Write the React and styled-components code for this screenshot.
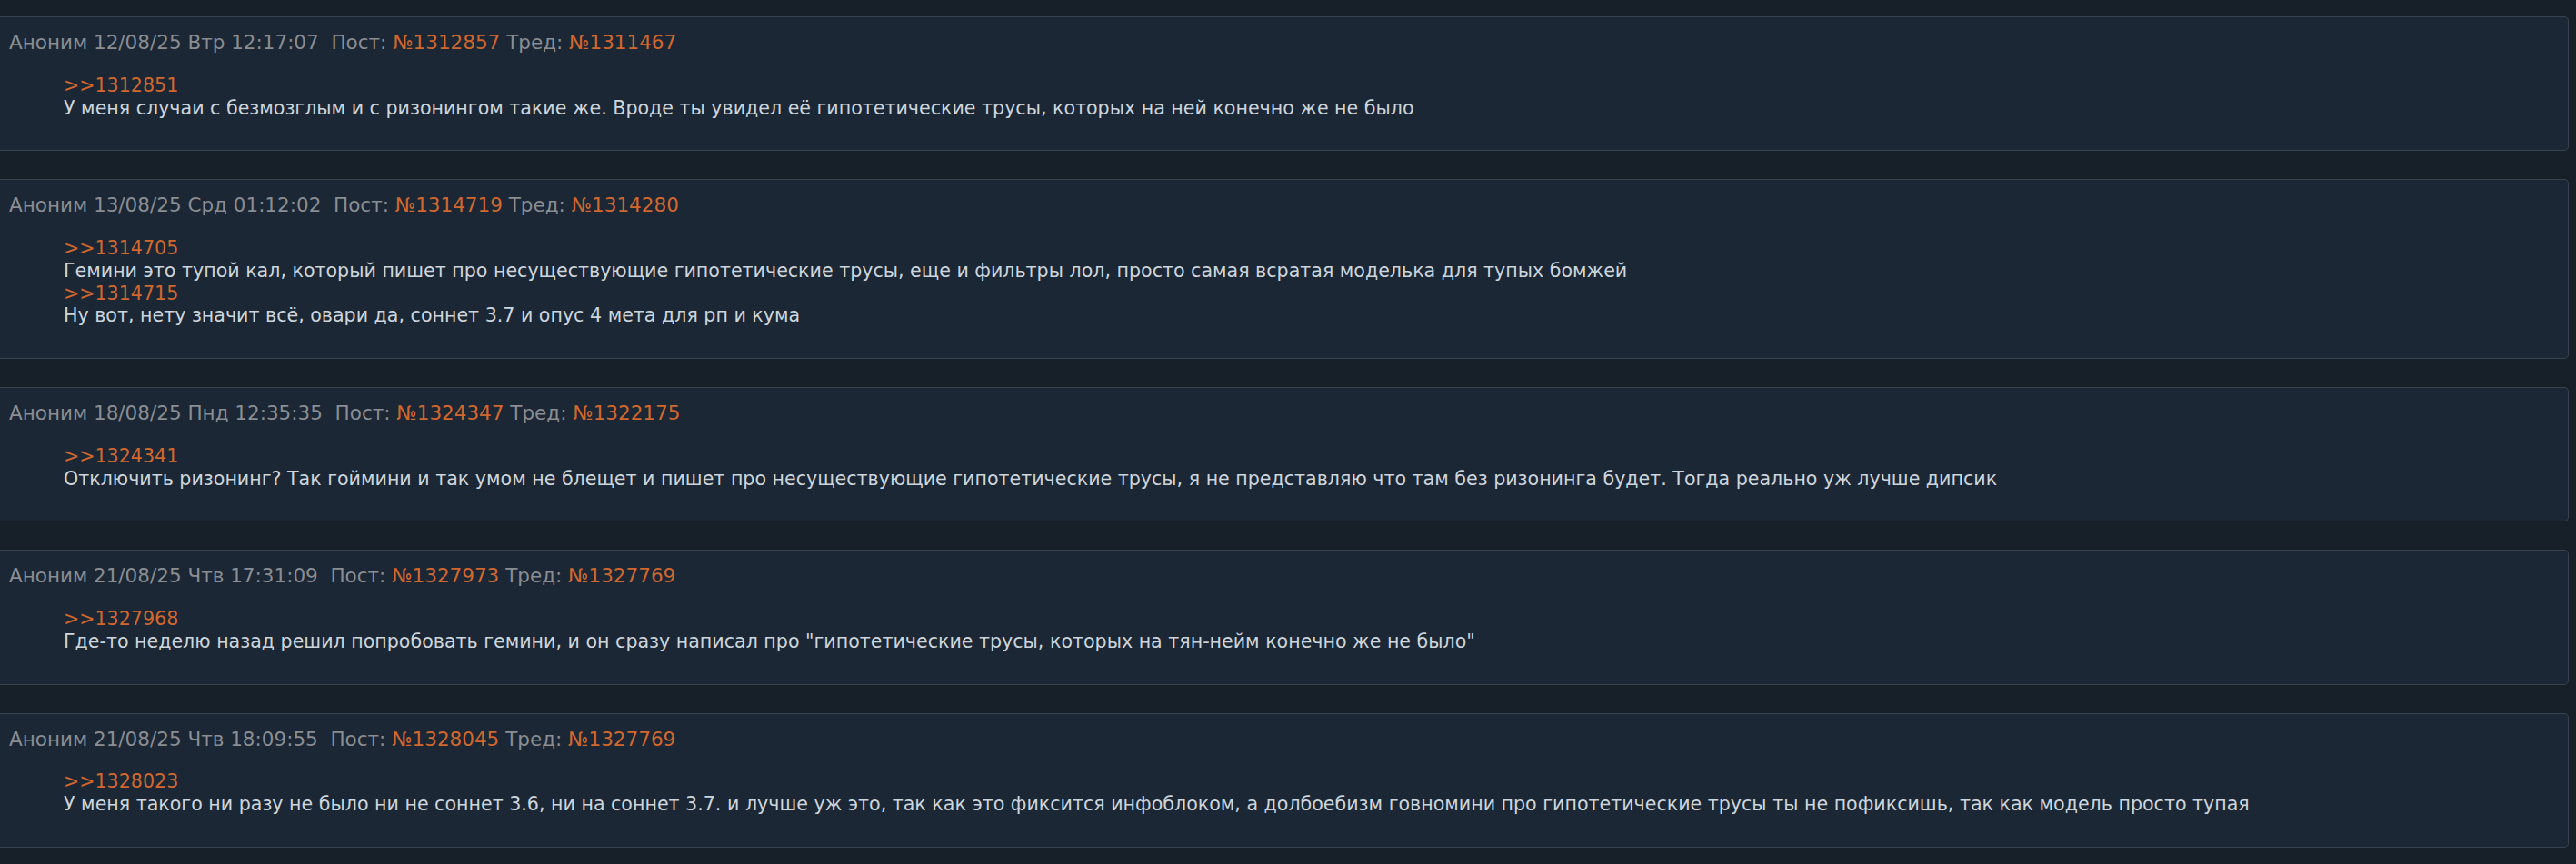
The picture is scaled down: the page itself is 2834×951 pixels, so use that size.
import React from 'react'
import styled, { createGlobalStyle } from 'styled-components'

const posts = [
    {
        date: '12/08/25 Втр 12:17:07',
        num: '1312857',
        thread: '1311467',
        body: [
            { ref: '1312851' },
            'У меня случаи с безмозглым и с ризонингом такие же. Вроде ты увидел её гипотетические трусы, которых на ней конечно же не было',
        ],
    },
    {
        date: '13/08/25 Срд 01:12:02',
        num: '1314719',
        thread: '1314280',
        body: [
            { ref: '1314705' },
            'Гемини это тупой кал, который пишет про несуществующие гипотетические трусы, еще и фильтры лол, просто самая всратая моделька для тупых бомжей',
            { ref: '1314715' },
            'Ну вот, нету значит всё, овари да, соннет 3.7 и опус 4 мета для рп и кума',
        ],
    },
    {
        date: '18/08/25 Пнд 12:35:35',
        num: '1324347',
        thread: '1322175',
        body: [
            { ref: '1324341' },
            'Отключить ризонинг? Так гоймини и так умом не блещет и пишет про несуществующие гипотетические трусы, я не представляю что там без ризонинга будет. Тогда реально уж лучше дипсик',
        ],
    },
    {
        date: '21/08/25 Чтв 17:31:09',
        num: '1327973',
        thread: '1327769',
        body: [
            { ref: '1327968' },
            'Где-то неделю назад решил попробовать гемини, и он сразу написал про "гипотетические трусы, которых на тян-нейм конечно же не было"',
        ],
    },
    {
        date: '21/08/25 Чтв 18:09:55',
        num: '1328045',
        thread: '1327769',
        body: [
            { ref: '1328023' },
            'У меня такого ни разу не было ни не соннет 3.6, ни на соннет 3.7. и лучше уж это, так как это фиксится инфоблоком, а долбоебизм говномини про гипотетические трусы ты не пофиксишь, так как модель просто тупая',
        ],
    },
]

const GlobalStyle = createGlobalStyle`
    html, body {
        margin: 0;
        padding: 0;
        background: #171f29;
    }
    body {
        font-family: "DejaVu Sans", Verdana, sans-serif;
    }
`

const App = () => {
    return (
        <>
            <GlobalStyle />
            <List>
                {posts.map((post) => (
                    <Card key={post.num}>
                        <Header>
                            Аноним {post.date}&nbsp; Пост: <PostLink>№{post.num}</PostLink> Тред:{' '}
                            <PostLink>№{post.thread}</PostLink>
                        </Header>
                        <Body>
                            {post.body.map((line, i) =>
                                typeof line === 'string' ? (
                                    <Line key={i}>{line}</Line>
                                ) : (
                                    <Quote key={i}>&gt;&gt;{line.ref}</Quote>
                                )
                            )}
                        </Body>
                    </Card>
                ))}
            </List>
        </>
    )
}

const List = styled.div`
    display: flex;
    flex-direction: column;
    gap: 31px;
    padding: 18px 8px 0 0;
`

const Card = styled.div`
    background: #1b2735;
    border: 1px solid #36424f;
    border-left: none;
    border-radius: 0 5px 5px 0;
    padding: 16px 0 34px 10px;
`

const Header = styled.div`
    font-size: 21.5px;
    line-height: 24.75px;
    color: #8a8d91;
    white-space: pre-wrap;
`

const PostLink = styled.span`
    color: #d2672e;
`

const Body = styled.div`
    margin-top: 22px;
    padding-left: 60px;
    font-size: 20.6px;
    line-height: 24.75px;
    color: #cdd5dc;
`

const Quote = styled.div`
    color: #d2672e;
`

const Line = styled.div``

export default App
